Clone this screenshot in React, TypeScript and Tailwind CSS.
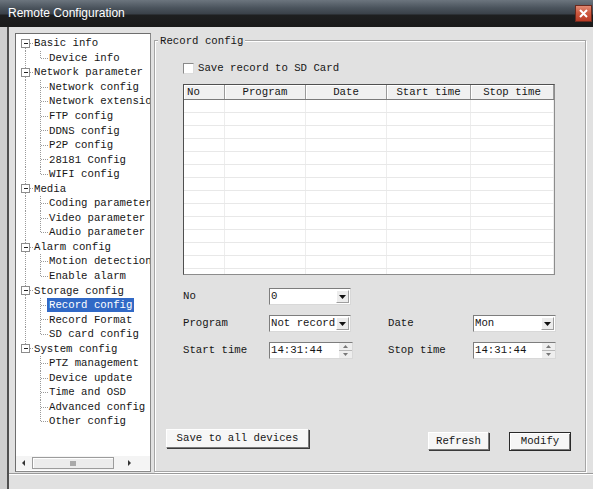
import React from 'react';

const mono = "font-['Liberation_Mono',monospace] text-[10.7px] text-[#161616]";

type TreeNode = { label: string; children: string[] };

const tree: TreeNode[] = [
  { label: 'Basic info', children: ['Device info'] },
  {
    label: 'Network parameter',
    children: ['Network config', 'Network extension', 'FTP config', 'DDNS config', 'P2P config', '28181 Config', 'WIFI config'],
  },
  { label: 'Media', children: ['Coding parameter', 'Video parameter', 'Audio parameter'] },
  { label: 'Alarm config', children: ['Motion detection', 'Enable alarm'] },
  { label: 'Storage config', children: ['Record config', 'Record Format', 'SD card config'] },
  { label: 'System config', children: ['PTZ management', 'Device update', 'Time and OSD', 'Advanced config', 'Other config'] },
];

const H = 14.55;
const M = 7.5;
const dot = { stroke: '#9a9a9a', strokeDasharray: '1 1', shapeRendering: 'crispEdges' as const };

function RootRow({ label, first, last }: { label: string; first: boolean; last: boolean }) {
  return (
    <div className="flex h-[14.55px] items-center">
      <svg width="18" height={H} className="shrink-0">
        <line x1="9.5" y1={first ? M : 0} x2="9.5" y2={last ? M : H} {...dot} />
        <line x1="14" y1={M} x2="18" y2={M} {...dot} />
        <rect x="5.5" y={M - 4} width="8" height="8" fill="#fff" stroke="#8c8c8c" shapeRendering="crispEdges" />
        <line x1="7.5" y1={M} x2="12" y2={M} stroke="#222" shapeRendering="crispEdges" />
      </svg>
      <span className={`${mono} whitespace-nowrap leading-[14px]`}>{label}</span>
    </div>
  );
}

function ChildRow({ label, lastChild, underLast, selected }: { label: string; lastChild: boolean; underLast: boolean; selected: boolean }) {
  return (
    <div className="flex h-[14.55px] items-center">
      <svg width="33" height={H} className="shrink-0">
        {!underLast && <line x1="9.5" y1="0" x2="9.5" y2={H} {...dot} />}
        <line x1="24.5" y1="0" x2="24.5" y2={lastChild ? M : H} {...dot} />
        <line x1="25" y1={M} x2="33" y2={M} {...dot} />
      </svg>
      {selected ? (
        <span className={`${mono} -ml-[2px] inline-block h-[14px] whitespace-nowrap bg-[#3169c6] px-[2px] leading-[14px] !text-white`}>{label}</span>
      ) : (
        <span className={`${mono} whitespace-nowrap leading-[14px]`}>{label}</span>
      )}
    </div>
  );
}

function Tree() {
  return (
    <div className="ml-[6px] mt-[6px] flex h-[439px] w-[136px] shrink-0 flex-col border border-[#8a8a8a] border-l-[#6e6e6e] border-t-[#6e6e6e] bg-white">
      <div className="flex-1 overflow-hidden pt-[2px]">
        {tree.map((n, i) => (
          <div key={n.label}>
            <RootRow label={n.label} first={i === 0} last={i === tree.length - 1} />
            {n.children.map((c, j) => (
              <ChildRow
                key={c}
                label={c}
                lastChild={j === n.children.length - 1}
                underLast={i === tree.length - 1}
                selected={c === 'Record config'}
              />
            ))}
          </div>
        ))}
      </div>
      <div className="mb-[1px] flex h-[14px] items-center bg-[#f4f4f4]">
        <div className="flex w-[16px] justify-center">
          <svg width="4" height="6"><path d="M3 0v6L0 3z" fill="#333" /></svg>
        </div>
        <div className="flex h-[12px] w-[82px] items-center justify-center border border-[#9c9c9c] bg-[#ececec] shadow-[inset_1px_1px_0_#fff]">
          <svg width="7" height="5">
            <path d="M1 0v5M3 0v5M5 0v5" stroke="#666" />
          </svg>
        </div>
        <div className="flex-1" />
        <div className="flex w-[22px] justify-start">
          <svg width="4" height="6"><path d="M0 0v6L3 3z" fill="#333" /></svg>
        </div>
      </div>
    </div>
  );
}

const cols = [
  { name: 'No', w: 'w-[41px]', left: true },
  { name: 'Program', w: 'w-[81px]' },
  { name: 'Date', w: 'w-[81px]' },
  { name: 'Start time', w: 'w-[84px]' },
  { name: 'Stop time', w: 'flex-1' },
];

function Table() {
  return (
    <div className="ml-[17px] mt-[10px] flex h-[191px] w-[372px] flex-col overflow-hidden border border-[#8c8c8c] border-l-[#4f4f4f] border-t-[#4f4f4f] bg-white">
      <div className="flex h-[15px] shrink-0 border-b border-[#7a7a7a] bg-[#f0f0f0]">
        {cols.map((c) => (
          <div
            key={c.name}
            className={`${c.w} ${mono} flex items-center border-r border-[#9a9a9a] shadow-[inset_1px_1px_0_#fff] leading-[14px] ${c.left ? 'pl-[3px]' : 'justify-center'}`}
          >
            {c.name}
          </div>
        ))}
      </div>
      {Array.from({ length: 14 }).map((_, r) => (
        <div key={r} className="flex h-[13px] shrink-0 border-b border-[#e8e8e8]">
          {cols.map((c) => (
            <div key={c.name} className={`${c.w} border-r border-[#ededed]`} />
          ))}
        </div>
      ))}
    </div>
  );
}

function DropArrow() {
  return (
    <svg width="7" height="4">
      <path d="M0 0h7L3.5 4z" fill="#111" />
    </svg>
  );
}

function Select({ value, w }: { value: string; w: string }) {
  return (
    <div className={`${w} flex h-[17px] border border-[#7d7d7d] border-r-[#d8d8d8] border-b-[#d8d8d8] bg-white`}>
      <div className={`${mono} flex-1 overflow-hidden whitespace-nowrap pl-[1px] leading-[15px]`}>{value}</div>
      <div className="m-[1px] flex w-[13px] items-center justify-center border border-[#9e9e9e] border-l-white border-t-white bg-[#ececec]">
        <DropArrow />
      </div>
    </div>
  );
}

function Spin({ value, w }: { value: string; w: string }) {
  return (
    <div className={`${w} flex h-[17px] border border-[#7d7d7d] border-r-[#d8d8d8] border-b-[#d8d8d8] bg-white`}>
      <div className={`${mono} flex-1 pl-[1px] leading-[15px]`}>{value}</div>
      <div className="flex w-[13px] flex-col bg-[#eeeeee]">
        <div className="flex flex-1 items-center justify-center border-b border-[#b8b8b8]">
          <svg width="5" height="3"><path d="M0 3h5L2.5 0z" fill="#777" /></svg>
        </div>
        <div className="flex flex-1 items-center justify-center">
          <svg width="5" height="3"><path d="M0 0h5L2.5 3z" fill="#777" /></svg>
        </div>
      </div>
    </div>
  );
}

function Label({ text, w }: { text: string; w: string }) {
  return <div className={`${w} ${mono} leading-[17px]`}>{text}</div>;
}

function Btn({ text, w, h, isDefault }: { text: string; w: string; h: string; isDefault?: boolean }) {
  return (
    <button
      className={`${w} ${h} ${mono} flex items-center justify-center border ${
        isDefault
          ? 'border-[#2a2a2a] shadow-[inset_1px_1px_0_#fff,inset_-1px_-1px_0_#7a7a7a]'
          : 'border-white border-b-[#7a7a7a] border-r-[#7a7a7a] shadow-[1px_1px_0_#3a3a3a]'
      } bg-[#f6f6f6]`}
    >
      {text}
    </button>
  );
}

function RecordGroup() {
  return (
    <div className="relative ml-[3px] mt-[13px] flex h-[432px] w-[432px] shrink-0 flex-col border border-[#a6a6a6] pl-[11px] pt-[22px] shadow-[inset_1px_1px_0_#fff,1px_1px_0_#fff]">
      <div className={`${mono} absolute -top-[7px] left-[3px] bg-[#e1e1e1] px-[2px] leading-[14px]`}>Record config</div>

      <div className="ml-[17px] flex h-[11px] items-center gap-[4px]">
        <div className="h-[11px] w-[11px] border border-[#8a8a8a] border-b-[#dcdcdc] border-r-[#dcdcdc] bg-white" />
        <span className={`${mono} leading-[11px]`}>Save record to SD Card</span>
      </div>

      <Table />

      <div className="ml-[17px] mt-[13px] flex flex-col gap-[10px]">
        <div className="flex">
          <Label text="No" w="w-[86px]" />
          <Select value="0" w="w-[82px]" />
        </div>
        <div className="flex">
          <Label text="Program" w="w-[86px]" />
          <Select value="Not record" w="w-[82px]" />
          <div className="w-[37px]" />
          <Label text="Date" w="w-[85px]" />
          <Select value="Mon" w="w-[83px]" />
        </div>
        <div className="flex">
          <Label text="Start time" w="w-[86px]" />
          <Spin value="14:31:44" w="w-[84px]" />
          <div className="w-[35px]" />
          <Label text="Stop time" w="w-[85px]" />
          <Spin value="14:31:44" w="w-[83px]" />
        </div>
      </div>

      <div className="mt-[70px] flex items-start">
        <Btn text="Save to all devices" w="w-[143px]" h="h-[19px]" />
        <div className="mt-[3px] ml-[119px] flex gap-[20px]">
          <Btn text="Refresh" w="w-[61px]" h="h-[18px]" />
          <Btn text="Modify" w="w-[62px]" h="h-[19px]" isDefault />
        </div>
      </div>
    </div>
  );
}

export default function App() {
  return (
    <div className="flex h-[489px] w-[593px] flex-col overflow-hidden bg-[#e1e1e1]">
      <div className="flex h-[27px] shrink-0 items-start bg-[linear-gradient(180deg,#6c757e_0px,#4a535c_8px,#3a4149_14px,#1e1f20_15px,#1a1a1a_27px)]">
        <span className="ml-[8px] mt-[6px] font-['Liberation_Sans',Arial,sans-serif] text-[12px] leading-[15px] text-white">
          Remote Configuration
        </span>
        <div className="ml-auto mr-[1px] mt-[5px] flex h-[17px] w-[17px] items-center justify-center border border-[#6b2a1e] bg-[linear-gradient(180deg,#e08a73_0%,#cf5a40_45%,#b93a24_100%)]">
          <svg width="9" height="9" viewBox="0 0 9 9">
            <path d="M1 1l7 7M8 1L1 8" stroke="#fff" strokeWidth="2" />
          </svg>
        </div>
      </div>
      <div className="flex flex-1">
        <div className="w-[9px] shrink-0 border-r-2 border-[#505050] bg-[#cfcfcf]" />
        <div className="flex flex-1 flex-col">
          <div className="flex h-[446px] shrink-0 items-start">
            <Tree />
            <RecordGroup />
          </div>
          <div className="flex-1 border-t border-[#9a9a9a] shadow-[inset_0_1px_0_#fff]" />
        </div>
      </div>
    </div>
  );
}
